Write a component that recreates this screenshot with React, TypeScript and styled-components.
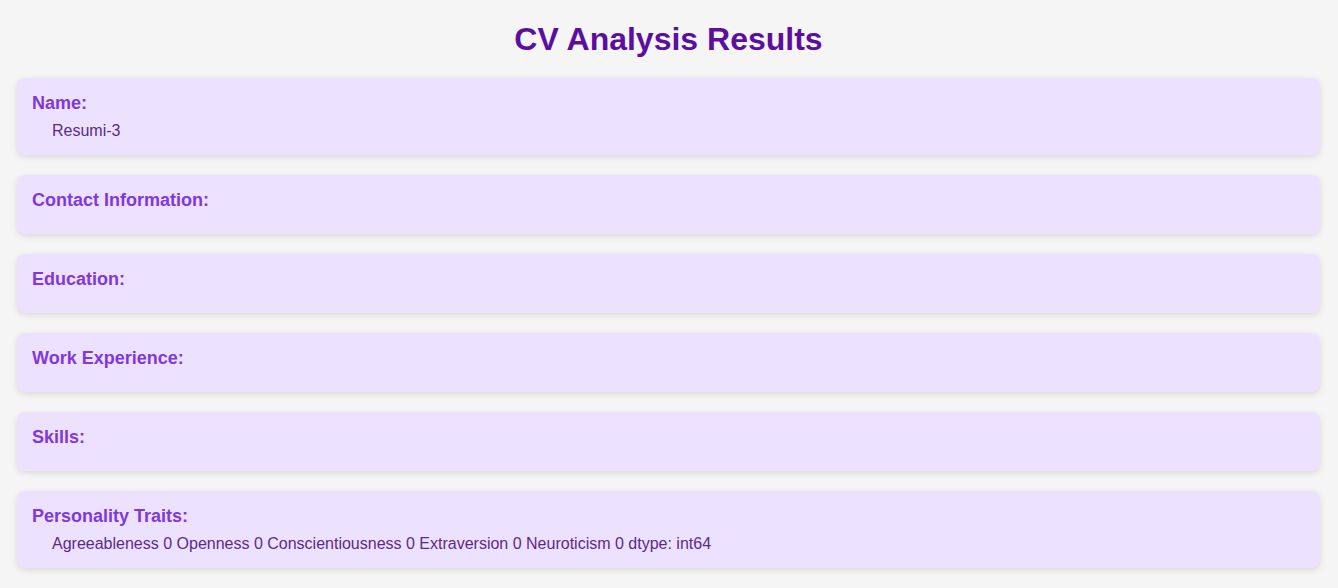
import React from "react";
import styled, { createGlobalStyle } from "styled-components";

const Global = createGlobalStyle`
  html, body { margin: 0; padding: 0; background: #f5f5f5; }
  body { font-family: "Liberation Sans", Arial, sans-serif; }
`;

const Page = styled.div`
  padding: 21px 18px 20px 17px;
`;

const Title = styled.h1`
  margin: 0 0 20px;
  text-align: center;
  font-size: 32px;
  line-height: 37px;
  font-weight: 700;
  color: #5c0f9e;
`;

const List = styled.div`
  display: flex;
  flex-direction: column;
  gap: 20px;
`;

const Card = styled.section`
  background: #ece2ff;
  border-radius: 8px;
  box-shadow: 0 2px 6px rgba(0, 0, 0, 0.12);
  padding: 16px 15px 15px;
`;

const Heading = styled.h3`
  margin: 0 0 9px;
  font-size: 18px;
  line-height: 19px;
  font-weight: 700;
  color: #8038dc;
`;

const Content = styled.p`
  margin: 0;
  padding-left: 20px;
  font-size: 16px;
  line-height: 18px;
  color: #5a2a8c;
`;

const sections: { title: string; body?: string }[] = [
  { title: "Name:", body: "Resumi-3" },
  { title: "Contact Information:" },
  { title: "Education:" },
  { title: "Work Experience:" },
  { title: "Skills:" },
  {
    title: "Personality Traits:",
    body:
      "Agreeableness 0 Openness 0 Conscientiousness 0 Extraversion 0 Neuroticism 0 dtype: int64",
  },
];

export default function App() {
  return (
    <>
      <Global />
      <Page>
        <Title>CV Analysis Results</Title>
        <List>
          {sections.map((s) => (
            <Card key={s.title}>
              <Heading>{s.title}</Heading>
              {s.body ? <Content>{s.body}</Content> : null}
            </Card>
          ))}
        </List>
      </Page>
    </>
  );
}
